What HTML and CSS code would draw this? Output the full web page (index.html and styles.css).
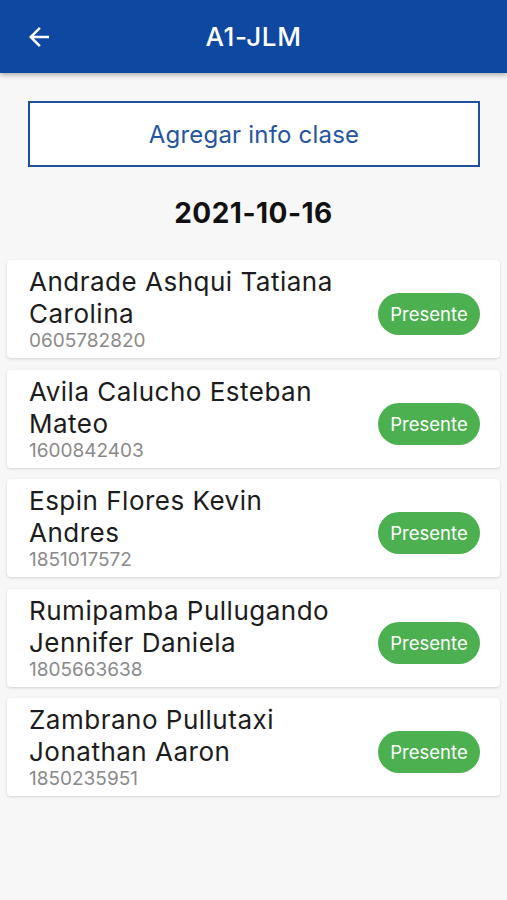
FILE: index.html
```html
<html lang="es">
<head>
    <title>A1-JLM</title>
    <link rel="stylesheet" href="styles.css">
</head>
<body>

<div class="appbar">
    <span class="back">
        <svg width="30" height="30" viewBox="0 0 24 24"><path d="M20 11H7.83l5.59-5.59L12 4l-8 8 8 8 1.41-1.41L7.83 13H20v-2z" fill="white"/></svg>
    </span>
    <h1>A1-JLM</h1>
</div>

<div class="content">
    <button class="outline">Agregar info clase</button>

    <h2 class="date">2021-10-16</h2>

    <div class="list">
        <div class="card">
            <div class="info">
                <div class="name">Andrade Ashqui Tatiana Carolina</div>
                <div class="cedula">0605782820</div>
            </div>
            <span class="pill">Presente</span>
        </div>
        <div class="card">
            <div class="info">
                <div class="name">Avila Calucho Esteban Mateo</div>
                <div class="cedula">1600842403</div>
            </div>
            <span class="pill">Presente</span>
        </div>
        <div class="card">
            <div class="info">
                <div class="name">Espin Flores Kevin Andres</div>
                <div class="cedula">1851017572</div>
            </div>
            <span class="pill">Presente</span>
        </div>
        <div class="card">
            <div class="info">
                <div class="name">Rumipamba Pullugando Jennifer Daniela</div>
                <div class="cedula">1805663638</div>
            </div>
            <span class="pill">Presente</span>
        </div>
        <div class="card">
            <div class="info">
                <div class="name">Zambrano Pullutaxi Jonathan Aaron</div>
                <div class="cedula">1850235951</div>
            </div>
            <span class="pill">Presente</span>
        </div>
    </div>
</div>

</body>
</html>
```

FILE: styles.css
```css
html {
    font-family: Inter, "Noto Sans", sans-serif;
}

body {
    margin: 0;
    background-color: #f7f7f7;
    color: #1c1c1c;
}

.appbar {
    height: 73px;
    background-color: #0e48a1;
    box-shadow: 0 2px 5px rgba(0, 0, 0, 0.3);
    display: flex;
    align-items: center;
    justify-content: center;
    position: relative;
}

.appbar .back {
    position: absolute;
    left: 24px;
    top: 22px;
}

.appbar h1 {
    margin: 0;
    color: white;
    font-size: 26px;
    font-weight: 500;
    letter-spacing: 0.6px;
}

.content {
    padding: 28px 7px 0 7px;
}

.outline {
    display: block;
    width: 452px;
    height: 66px;
    margin: 0 0 0 21px;
    background: white;
    border: 2px solid #1f50a0;
    color: #2554a1;
    font-family: inherit;
    font-size: 24px;
    letter-spacing: 0.2px;
}

.date {
    text-align: center;
    font-size: 28px;
    font-weight: 700;
    letter-spacing: 0.5px;
    margin: 29px 0 30px 0;
    color: #111;
}

.list {
    display: flex;
    flex-direction: column;
    gap: 11.5px;
}

.card {
    background: white;
    border-radius: 4px;
    box-shadow: 0 1px 3px rgba(0, 0, 0, 0.15);
    height: 98px;
    box-sizing: border-box;
    display: flex;
    align-items: flex-start;
    padding: 6px 20px 0 22px;
}

.info {
    flex: 1;
}

.name {
    font-size: 26px;
    line-height: 32px;
    letter-spacing: 0.5px;
    width: 330px;
}

.cedula {
    font-size: 19px;
    color: #8a8a8a;
    line-height: 22px;
}

.pill {
    background-color: #4caf50;
    color: white;
    font-size: 18.5px;
    border-radius: 21px;
    width: 102px;
    height: 42px;
    display: flex;
    align-items: center;
    justify-content: center;
    margin-top: 27px;
}
```
